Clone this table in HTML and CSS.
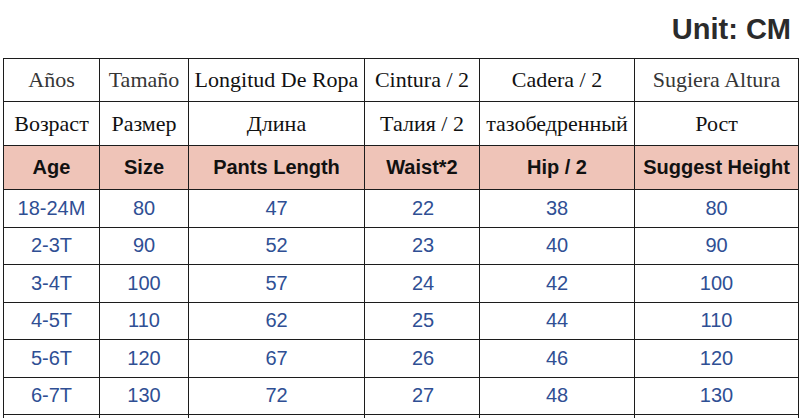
FILE: index.html
```html
<!DOCTYPE html>
<html>
<head>
<meta charset="utf-8">
<link rel="stylesheet" href="styles.css">
</head>
<body>
<div class="page">
  <div class="unit-bar"><span class="unit">Unit: CM</span></div>
  <table class="size-table">
    <colgroup>
      <col class="c1"><col class="c2"><col class="c3"><col class="c4"><col class="c5"><col class="c6">
    </colgroup>
    <tr class="lang">
      <td class="soft">Años</td><td class="soft">Tamaño</td><td>Longitud De Ropa</td><td>Cintura / 2</td><td>Cadera / 2</td><td class="soft">Sugiera Altura</td>
    </tr>
    <tr class="lang lang2">
      <td>Возраст</td><td>Размер</td><td>Длина</td><td>Талия / 2</td><td>тазобедренный</td><td>Рост</td>
    </tr>
    <tr class="head">
      <td>Age</td><td>Size</td><td>Pants Length</td><td>Waist*2</td><td>Hip / 2</td><td>Suggest Height</td>
    </tr>
    <tr class="data"><td>18-24M</td><td>80</td><td>47</td><td class="left">22</td><td>38</td><td>80</td></tr>
    <tr class="data"><td>2-3T</td><td>90</td><td>52</td><td class="left">23</td><td>40</td><td>90</td></tr>
    <tr class="data"><td>3-4T</td><td>100</td><td>57</td><td class="left">24</td><td>42</td><td>100</td></tr>
    <tr class="data"><td>4-5T</td><td>110</td><td>62</td><td class="left">25</td><td>44</td><td>110</td></tr>
    <tr class="data"><td>5-6T</td><td>120</td><td>67</td><td class="left">26</td><td>46</td><td>120</td></tr>
    <tr class="data"><td>6-7T</td><td>130</td><td>72</td><td class="left">27</td><td>48</td><td>130</td></tr>
    <tr class="data"><td></td><td></td><td></td><td></td><td></td><td></td></tr>
  </table>
</div>
</body>
</html>
```
FILE: styles.css
```css
html, body {
  margin: 0;
  padding: 0;
  background: #ffffff;
}
.page {
  width: 800px;
  height: 418px;
  overflow: hidden;
}
.unit-bar {
  height: 58px;
  display: flex;
  justify-content: flex-end;
  align-items: flex-start;
  padding-right: 9px;
  box-sizing: border-box;
  padding-top: 13px;
}
.unit {
  font-family: "Liberation Sans", Arial, sans-serif;
  font-weight: bold;
  font-size: 29px;
  line-height: 32px;
  color: #2b2b2b;
}
.size-table {
  margin-left: 3px;
  border-collapse: collapse;
  table-layout: fixed;
  width: 795px;
}
.c1 { width: 96px; }
.c2 { width: 89px; }
.c3 { width: 176px; }
.c4 { width: 115px; }
.c5 { width: 155px; }
.c6 { width: 164px; }
.size-table td {
  border: 1px solid #1c1c1c;
  text-align: center;
  padding: 0;
  white-space: nowrap;
  overflow: hidden;
}
.lang td {
  font-family: "Liberation Serif", "Times New Roman", serif;
  font-size: 22px;
  color: #111111;
  height: 42px;
}
.lang2 td {
  height: 43px;
}
.lang td.soft {
  color: #363636;
}
.head td {
  background: #efc4b8;
  font-family: "Liberation Sans", Arial, sans-serif;
  font-weight: bold;
  font-size: 20px;
  color: #111111;
  height: 43px;
}
.data td {
  font-family: "Liberation Sans", Arial, sans-serif;
  font-size: 20px;
  color: #2f4f94;
  height: 36.5px;
}
.data td.left {
  text-align: left;
  padding-left: 47px;
}
```
